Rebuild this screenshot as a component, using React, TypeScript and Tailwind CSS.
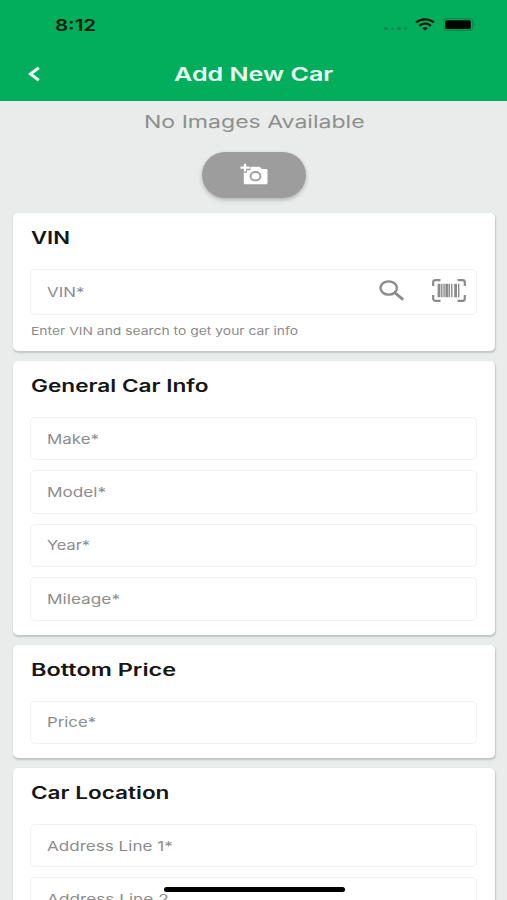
import { useLayoutEffect, useRef, useState } from "react";
import type { ReactNode } from "react";

/** A single line of text stretched horizontally to the given width. */
function Wide({ w, children }: { w: number; children: string }) {
  const ref = useRef<HTMLSpanElement>(null);
  const [scale, setScale] = useState(1);
  useLayoutEffect(() => {
    if (ref.current) setScale(w / ref.current.offsetWidth);
  }, [w]);
  return (
    <span className="block" style={{ width: w }}>
      <span
        ref={ref}
        className="inline-block origin-left whitespace-nowrap"
        style={{ transform: `scaleX(${scale})` }}
      >
        {children}
      </span>
    </span>
  );
}

function Card({ title, w, className, children }: { title: string; w: number; className: string; children: ReactNode }) {
  return (
    <section
      className={`shrink-0 rounded-[5px] bg-white pr-[18px] pl-[17px] shadow-[0.5px_1.5px_1.5px_rgba(0,0,0,0.16)] ${className}`}
    >
      <h2 className="flex h-[56px] items-start pt-[13.3px] pl-[0.5px] text-[17px] leading-6 font-[580] text-[#161616]">
        <Wide w={w}>{title}</Wide>
      </h2>
      <div className="flex flex-col gap-[10px]">{children}</div>
    </section>
  );
}

function Field({ label, w, tall, children }: { label: string; w: number; tall?: boolean; children?: ReactNode }) {
  return (
    <div
      className={`flex items-center rounded-[5px] border-[1.5px] border-[#f1f1f1] pl-4 text-[13.7px] leading-5 text-[#8d8d8d] ${tall ? "h-[46.5px]" : "h-[43.4px]"}`}
    >
      <Wide w={w}>{label}</Wide>
      {children}
    </div>
  );
}

export default function App() {
  return (
    <div className="relative flex h-[900px] w-[507px] flex-col overflow-hidden bg-[#eaeceb] font-['Inter','Liberation_Sans',sans-serif]">
      <header className="flex h-[100.5px] shrink-0 flex-col bg-[#02ad5b]">
        <div className="flex h-[49px] items-center justify-between pr-[31px] pl-[55px]">
          <div className="text-[16px] leading-5 font-semibold text-[#04200f]">
            <Wide w={41}>8:12</Wide>
          </div>
          <div className="flex items-center">
            <div className="mt-2 mr-[8px] flex gap-[3px]">
              <i className="h-[3px] w-[3.4px] rounded-full bg-[#078a49]" />
              <i className="h-[3px] w-[3.4px] rounded-full bg-[#078a49]" />
              <i className="h-[3px] w-[3.4px] rounded-full bg-[#078a49]" />
              <i className="h-[3px] w-[3.4px] rounded-full bg-[#078a49]" />
            </div>
            <svg width="20" height="13" viewBox="0 0 20 13" fill="none" stroke="#03180c" strokeWidth="2.3">
              <path d="M1 4.5C6 .2 14 .2 19 4.5M4.2 7.8c3.4-2.8 8.2-2.8 11.6 0" />
              <path d="M7.2 10.2c1.6-1.5 4-1.5 5.6 0L10 12.6z" fill="#03180c" stroke="none" />
            </svg>
            <svg className="ml-[8px]" width="33" height="13" viewBox="0 0 33 13">
              <rect x=".6" y=".6" width="29" height="11.8" rx="3" fill="none" stroke="#078a49" strokeWidth="1.1" />
              <rect x="2.2" y="2.2" width="25.6" height="8.8" rx="1.5" fill="#020704" />
              <path d="M31 4.8c1.5.4 1.5 3 0 3.4z" fill="#078a49" />
            </svg>
          </div>
        </div>
        <div className="flex h-[50px] items-center pl-[28px] text-[18.8px] leading-6 font-semibold text-[#e9fff2]">
          <svg width="12" height="16" viewBox="0 0 12 16" fill="none" stroke="#e9fff2" strokeWidth="3">
            <path d="M10.8 1.8 2.4 8l8.4 6.2" />
          </svg>
          <h1 className="mt-px ml-[133.5px]">
            <Wide w={159}>Add New Car</Wide>
          </h1>
        </div>
      </header>

      <div className="flex h-[112px] shrink-0 flex-col items-center pt-[9px]">
        <div className="text-[17.5px] leading-6 text-[#8d8f8e]">
          <Wide w={220}>No Images Available</Wide>
        </div>
        <button className="mt-[18px] flex h-[46.5px] w-[104px] items-center justify-center rounded-full bg-[#9d9d9d] shadow-[0_2px_4px_rgba(0,0,0,0.24)]">
          <svg className="-mt-[2px]" width="28" height="22" viewBox="0 0 28 22">
            <path
              d="M10.5 3.8h9.2l2.1 2.1h4.1c1 0 1.6.6 1.6 1.5v12.4c0 .9-.6 1.5-1.6 1.5H5.4c-1 0-1.6-.6-1.6-1.5V9.7h3.1V7.2h3.6z"
              fill="#fff"
            />
            <path d="M5 .8v7.6M.5 4.6h9.2" stroke="#fff" strokeWidth="2.2" />
            <ellipse cx="15.5" cy="13.2" rx="5" ry="4.2" fill="#fff" stroke="#9d9d9d" strokeWidth="1.9" />
          </svg>
        </button>
      </div>

      <main className="flex flex-col gap-[10px] pr-3 pl-[13px]">
        <Card title="VIN" w={39} className="h-[138.5px]">
          <Field label="VIN*" w={37} tall>
            <svg className="-mt-[3px] ml-[295px]" width="26" height="21" viewBox="0 0 26 21" fill="none" stroke="#8b8b8b">
              <ellipse cx="9.7" cy="8" rx="8.2" ry="6.7" strokeWidth="2.3" />
              <path d="m15.7 12.7 8.5 7" strokeWidth="2.8" />
            </svg>
            <svg className="-mt-[3px] ml-[27px]" width="34" height="23" viewBox="0 0 34 23" fill="none" stroke="#8b8b8b">
              <path
                d="M1.2 7V3.2Q1.2 1.2 3.4 1.2H8.5M25.5 1.2h5.1q2.2 0 2.2 2V7M32.8 16v3.8q0 2-2.2 2h-5.1M8.5 21.8H3.4q-2.2 0-2.2-2V16"
                strokeWidth="2.2"
              />
              <path d="M7 4.8v13.4M14.8 4.8v13.4M23.6 4.8v13.4" strokeWidth="2.8" />
              <path d="M9.8 4.8v13.4M12.1 4.8v13.4M17.3 4.8v13.4M19.8 4.8v13.4M26.7 4.8v13.4" strokeWidth="1.4" />
            </svg>
          </Field>
          <p className="-mt-[2px] pl-[0.5px] text-[11px] leading-4 text-[#8b8b8b]">
            <Wide w={267.5}>Enter VIN and search to get your car info</Wide>
          </p>
        </Card>
        <Card title="General Car Info" w={177} className="h-[273.5px]">
          <Field label="Make*" w={52} />
          <Field label="Model*" w={59} />
          <Field label="Year*" w={43} />
          <Field label="Mileage*" w={73} />
        </Card>
        <Card title="Bottom Price" w={145} className="h-[113.5px]">
          <Field label="Price*" w={49} />
        </Card>
        <Card title="Car Location" w={138} className="h-[180px]">
          <Field label="Address Line 1*" w={126} />
          <Field label="Address Line 2" w={122} />
        </Card>
      </main>

      <div className="absolute top-[887px] left-[164px] h-[5px] w-[180.5px] rounded-full bg-black" />
    </div>
  );
}
